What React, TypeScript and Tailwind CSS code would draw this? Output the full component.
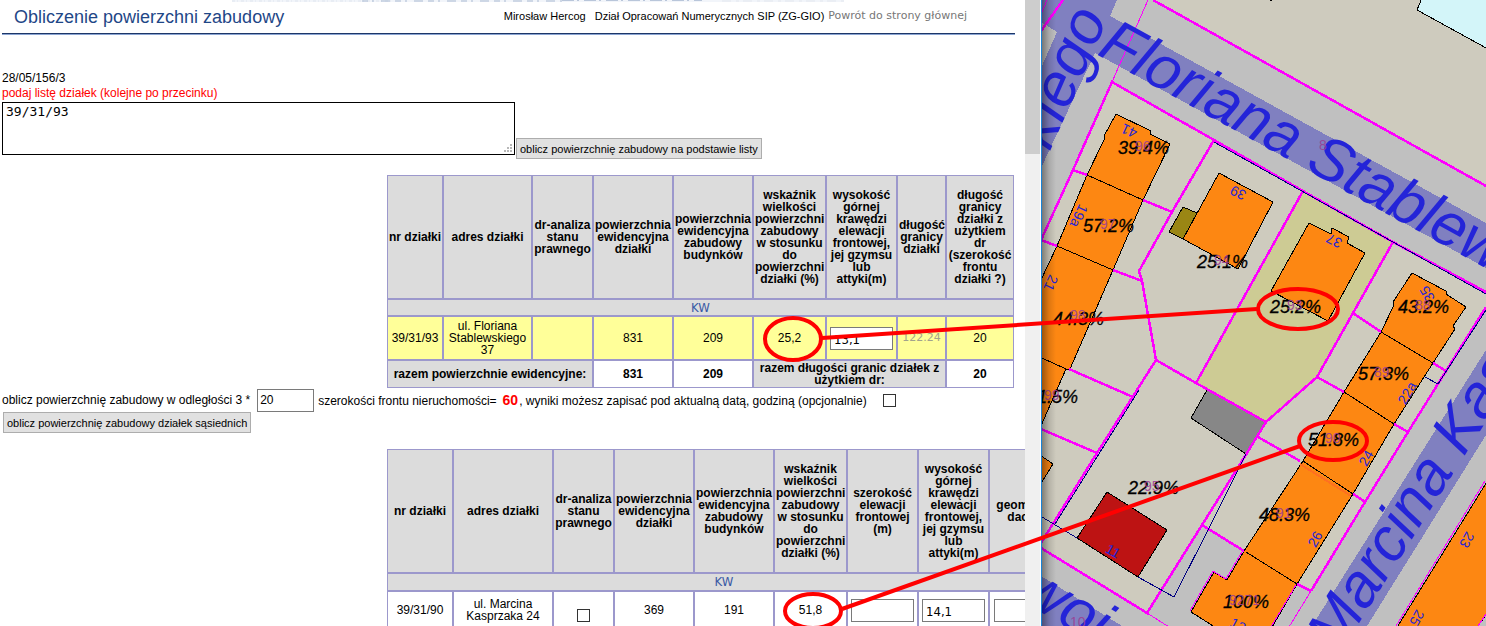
import React from "react";

const ORANGE = "#fd8712";
const MAGENTA = "#ff00ff";

const th = "border border-[#9c98cc] bg-[#dcdcdc] p-px text-center align-middle text-xs leading-3 font-bold";
const td = "border border-[#9c98cc] p-px text-center align-middle text-xs leading-3";
const cellInput = "mx-auto block h-[23px] w-[63px] border border-[#7a7a7a] bg-white px-[3px] pt-[2px] font-['DejaVu_Sans_Condensed',sans-serif] text-[13px] text-black";
const pushButton = "h-[21px] border border-[#adadad] bg-[#e1e1e1] px-[3px] text-left text-[11px] leading-4 whitespace-nowrap text-black";
const tick = "m-0 size-[13px] shrink-0 appearance-none border border-[#333] bg-white";

const areaHeaders = [
  "dr-analiza stanu prawnego",
  "powierzchnia ewidencyjna działki",
  "powierzchnia ewidencyjna zabudowy budynków",
  "wskaźnik wielkości powierzchni zabudowy w stosunku do powierzchni działki (%)",
];
const heightHeader = "wysokość górnej krawędzi elewacji frontowej, jej gzymsu lub attyki(m)";

function Columns({ widths }: { widths: number[] }) {
  return (
    <colgroup>
      {widths.map((w, i) => (
        <col key={i} style={{ width: w }} />
      ))}
    </colgroup>
  );
}

function Header() {
  return (
    <header className="relative mr-[10px] ml-[2px] flex h-[35px] items-center border-b border-[#8aa4d2]">
      <svg className="absolute top-0 left-[230px] h-[2px] w-[612px]" viewBox="0 0 612 2" preserveAspectRatio="none" aria-hidden="true">
        <rect width="612" height="2" fill="#f2f5fa" />
        <path d="M0 1H160" stroke="#dfe5ee" strokeDasharray="3 2 1 3" />
        <path d="M130 1H330" stroke="#a9b9d1" strokeDasharray="6 4 2 7 9 5" />
        <path d="M330 .5H470" stroke="#b9c6da" strokeDasharray="12 3 2 5" />
        <path d="M490 1H612" stroke="#e3e7ee" strokeDasharray="9 5 3 4" />
      </svg>
      <div className="flex h-[34px] w-full items-center border-b border-[#1d3768]">
        <h1 className="ml-3 text-lg text-[#1f4787]">Obliczenie powierzchni zabudowy</h1>
        <div className="mr-12 ml-auto flex items-center text-[11px] whitespace-nowrap">
          <span>Mirosław Hercog</span>
          <span className="ml-[9px]">Dział Opracowań Numerycznych SIP (ZG-GIO)</span>
          <a href="#start" className="ml-1 font-['DejaVu_Sans',sans-serif] text-[#777]">Powrót do strony głównej</a>
        </div>
      </div>
    </header>
  );
}

function PlotTable() {
  return (
    <table className="ml-[387px] w-[627px] table-fixed border-separate border-spacing-0">
      <Columns widths={[56, 89, 61, 80, 80, 73, 71, 49, 68]} />
      <thead>
        <tr className="h-[124px]">
          <th className={`${th} whitespace-nowrap`}>nr działki</th>
          <th className={th}>adres działki</th>
          {areaHeaders.map((h) => (
            <th key={h} className={th}>{h}</th>
          ))}
          <th className={th}>{heightHeader}</th>
          <th className={th}>długość granicy działki</th>
          <th className={th}>długość granicy działki z użytkiem dr (szerokość frontu działki ?)</th>
        </tr>
      </thead>
      <tbody>
        <tr className="h-[17px]">
          <td colSpan={9} className={`${td} bg-[#dcdcdc]`}>
            <a href="#kw" className="font-['DejaVu_Sans_Condensed',sans-serif] text-[13px] text-[#3a5aa5]">KW</a>
          </td>
        </tr>
        <tr className="h-[44px] bg-[#ffff99]">
          <td className={td}>39/31/93</td>
          <td className={td}>ul. Floriana Stablewskiego 37</td>
          <td className={td} />
          <td className={td}>831</td>
          <td className={td}>209</td>
          <td className={td}>25,2</td>
          <td className={td}>
            <input aria-label="wysokość elewacji" defaultValue="13,1" className={cellInput} />
          </td>
          <td className={`${td} font-['DejaVu_Sans',sans-serif] text-[11px] text-[#a3a38c]`}>122.24</td>
          <td className={td}>20</td>
        </tr>
        <tr className="h-[28px] font-bold">
          <td colSpan={3} className={`${td} bg-[#dcdcdc]`}>razem powierzchnie ewidencyjne:</td>
          <td className={td}>831</td>
          <td className={td}>209</td>
          <td colSpan={3} className={`${td} bg-[#dcdcdc]`}>razem długości granic działek z użytkiem dr:</td>
          <td className={td}>20</td>
        </tr>
      </tbody>
    </table>
  );
}

function NeighbourTable() {
  return (
    <table className="ml-[387px] w-[674px] table-fixed border-separate border-spacing-0">
      <Columns widths={[66, 100, 61, 80, 80, 73, 71, 71, 72]} />
      <thead>
        <tr className="h-[124px]">
          <th className={th}>nr działki</th>
          <th className={th}>adres działki</th>
          {areaHeaders.map((h) => (
            <th key={h} className={th}>{h}</th>
          ))}
          <th className={th}>szerokość elewacji frontowej (m)</th>
          <th className={th}>{heightHeader}</th>
          <th className={th}>geometria dachu</th>
        </tr>
      </thead>
      <tbody>
        <tr className="h-[18px]">
          <td colSpan={9} className={`${td} bg-[#dcdcdc]`}>
            <a href="#kw" className="font-['DejaVu_Sans_Condensed',sans-serif] text-[13px] text-[#3a5aa5]">KW</a>
          </td>
        </tr>
        <tr className="h-[38px]">
          <td className={td}>39/31/90</td>
          <td className={td}>ul. Marcina Kasprzaka 24</td>
          <td className={`${td} pt-3`}>
            <input type="checkbox" aria-label="dr-analiza stanu prawnego" className={`${tick} mx-auto block`} />
          </td>
          <td className={td}>369</td>
          <td className={td}>191</td>
          <td className={td}>51,8</td>
          <td className={td}><input aria-label="szerokość elewacji" className={cellInput} /></td>
          <td className={td}><input aria-label="wysokość elewacji działki sąsiedniej" defaultValue="14,1" className={cellInput} /></td>
          <td className={td}><input aria-label="geometria dachu" className={cellInput} /></td>
        </tr>
      </tbody>
    </table>
  );
}

const parcelLines = [
  "1153,0 1486,186",
  "1063,0 1041,31",
  "1041,240 1073,170 1112,82 1214,140 1303,191 1393,242 1486,292",
  "1486,307 1446,371 1408,432 1365,502 1311,591",
  "1041,548 1147,613 1202,525 1247,453 1266,422",
  "1041,543 1097,453 1156,360 1142,281 1139,271 1172,212 1214,140",
  "1073,170 1087,175",
  "1143,200 1172,212",
  "1041,240 1057,246",
  "1113,270 1142,281",
  "1303,191 1196,383",
  "1156,360 1196,383 1266,422 1317,377 1393,242",
  "1354,314 1381,332",
  "1433,363 1446,371",
  "1317,377 1344,392",
  "1394,424 1408,432",
  "1258,437 1300,461",
  "1353,494 1365,502",
  "1202,525 1244,551",
  "1297,584 1311,591",
  "1069,369 1133,397",
  "1041,429 1097,453",
];

const shares: [number, number, string][] = [
  [1118, 154, "39.4%"], [1083, 232, "57.2%"], [1053, 325, "44.3%"], [1197, 268, "25.1%"],
  [1270, 313, "25.2%"], [1398, 313, "43.2%"], [1358, 380, "57.3%"], [1308, 446, "51.8%"],
  [1259, 521, "48.3%"], [1223, 608, "100%"], [1128, 494, "22.9%"], [1037, 403, "1.5%"],
];

const plotNumbers: [number, number, string][] = [
  [1135, 151, "96"], [1100, 229, "97"], [1070, 320, "98"], [1214, 265, "94"], [1287, 310, "93"],
  [1415, 310, "88"], [1374, 377, "89"], [1325, 443, "90"], [1276, 518, "91"], [1144, 491, "95"],
  [1229, 605, "9271"], [1044, 400, "99"], [1319, 150, "8"], [1070, 627, "10"],
];

const houseNumbers: [number, number, number, string][] = [
  [1129, 131, 205, "41"], [1238, 193, 207, "39"], [1334, 241, 207, "37"], [1427, 294, 240, "35"],
  [1079, 216, 115, "19a"], [1051, 283, 115, "21"], [1407, 393, -60, "22a"], [1366, 458, -60, "24"],
  [1315, 539, -60, "26"], [1467, 540, 120, "23"], [1417, 618, 120, "25"], [1238, 625, 28, "13"],
  [1113, 551, 30, "11"],
];

function CadastralMap() {
  return (
    <svg
      className="block size-full"
      viewBox="1042 0 444 626"
      preserveAspectRatio="xMinYMin slice"
      role="img"
      aria-label="Mapa działek i budynków"
      fontFamily="'Liberation Sans', Arial, sans-serif"
    >
      <defs>
        <linearGradient id="edge" x1="0" x2="1" y1="0" y2="0">
          <stop offset="0" stopColor="#000" stopOpacity=".38" />
          <stop offset=".5" stopColor="#000" stopOpacity=".12" />
          <stop offset="1" stopColor="#000" stopOpacity="0" />
        </linearGradient>
      </defs>
      <g shapeRendering="crispEdges">
        <rect x="1041" width="445" height="626" fill="#c0c0c0" />
        <polygon points="1153,0 1486,0 1486,186" fill="#cecbbe" />
        <polygon points="1422,-2 1417,10 1488,49 1488,-2" fill="#d3f5f9" stroke="#000" />
        <rect x="1270" width="2" height="1" fill="#000" />
        <polygon
          points="1112,82 1486,292 1486,307 1446,371 1408,432 1365,502 1311,591 1297,584 1244,551 1202,525 1147,613 1041,548 1041,240"
          fill="#cecbbe"
        />
        <polygon points="1303,191 1393,242 1317,377 1266,422 1196,383" fill="#cdcb94" />

        <g fill="#8080c0">
          <path d="M1041 0H1117L1110 16L1486 223V268L1095 53L1041 168V68L1057 32L1041 22Z" />
          <polygon points="1486,350 1486,435 1367,626 1312,626" />
          <polygon points="1041,576 1122,626 1041,626" />
        </g>

        <g fill={ORANGE} stroke="#000">
          <polygon points="1116,114 1151,131 1150,134 1170,144 1143,200 1113,270 1070,369 1066,369 1040,428 1040,282 1057,246 1087,175 1104,140 1104,136" />
          <polygon points="1040,455 1053,464 1040,485" />
          <polygon points="1219,173 1273,202 1238,269 1183,239" />
          <polygon points="1309,223 1331,234 1332,228 1349,237 1347,243 1365,253 1328,321 1271,291" />
          <polygon points="1412,273 1446,291 1446,294 1466,307 1453,326 1455,329 1433,363 1394,424 1353,494 1297,584 1271,629 1218,629 1191,612 1214,572 1227,580 1244,551 1303,461 1344,392 1381,332 1394,305 1393,302" />
          <polygon points="1488,480 1396,629 1476,629 1488,612" />
          <polygon points="1183,207 1197,213 1183,239 1169,232" fill="#9a8614" />
          <polygon points="1207,390 1265,422 1246,454 1191,418" fill="#878787" />
          <polygon points="1107,492 1167,530 1138,577 1077,538" fill="#bd1313" />
        </g>
        <g stroke="#000" fill="none">
          <path d="M1087 175L1143 200M1057 246L1113 270M1042 358L1066 369M1381 332L1433 363M1344 392L1394 424M1303 461L1353 494M1246 552L1297 584" />
        </g>
        <path d="M1300 464L1351 496" stroke="#ff7020" strokeWidth="2" />
        <g stroke={MAGENTA} strokeWidth="2.5" fill="none">
          {parcelLines.map((points) => (
            <polyline key={points} points={points} />
          ))}
        </g>
        <g stroke={MAGENTA} fill="none">
          <path d="M1148 0L1112 82M1047 0L1041 14M1147 613L1169 627M1311 591L1289 627M1485 481L1396 626M1486 614L1478 626" />
          <path d="M1190 611L1213 571L1226 579L1243 550M1296 585L1271 627" />
        </g>
        <g stroke="#000080" fill="none">
          <path d="M1214 142L1486 294M1486 310L1438 384L1425 377M1042 517L1077 538M1138 577L1174 597L1207 532L1246 454M1139 390L1055 524" />
        </g>
      </g>

      <g fill="#2424d8" fontSize="61" fontStyle="italic">
        <text transform="translate(1096 54) rotate(28.8)">Floriana Stablew</text>
        <text transform="translate(1108 18) rotate(-66.5)" textAnchor="end">kiego</text>
        <text transform="translate(1339 655) rotate(-57.8)">Marcina Kas</text>
        <text transform="translate(1017 598) rotate(31)">woj</text>
      </g>
      <g fill="#2424d8" fontSize="14" textAnchor="middle">
        {houseNumbers.map(([x, y, angle, label]) => (
          <text key={label} transform={`translate(${x} ${y}) rotate(${angle})`} dy="5">{label}</text>
        ))}
      </g>
      <g fontSize="18" fontStyle="italic" stroke="#000" strokeWidth=".3">
        {shares.map(([x, y, label]) => (
          <text key={label} x={x} y={y}>{label}</text>
        ))}
      </g>
      <g fontSize="14" fill="#9b3f93" fillOpacity=".9">
        {plotNumbers.map(([x, y, label]) => (
          <text key={label} x={x} y={y}>{label}</text>
        ))}
      </g>
      <rect x="1042" width="14" height="626" fill="url(#edge)" />
    </svg>
  );
}

function Annotations() {
  return (
    <svg
      className="pointer-events-none absolute inset-0 size-full"
      viewBox="0 0 1486 626"
      preserveAspectRatio="xMinYMin slice"
      fill="none"
      stroke="#ff0000"
      strokeWidth="4"
      aria-hidden="true"
    >
      <ellipse cx="793" cy="339" rx="28" ry="21" />
      <path d="M822 338L1257 309" />
      <ellipse cx="1298" cy="309" rx="40" ry="20" />
      <ellipse cx="813" cy="611" rx="28" ry="17" />
      <path d="M842 609L1300 446" />
      <ellipse cx="1333" cy="441" rx="34" ry="19" />
    </svg>
  );
}

export default function App() {
  return (
    <div className="relative grid h-screen grid-cols-[1041fr_445fr] overflow-hidden bg-white font-['Liberation_Sans',Arial,sans-serif] text-black">
      <div className="flex min-w-0 overflow-hidden">
        <main className="min-w-0 flex-1 overflow-hidden">
          <Header />
          <section className="mt-9 ml-[2px] text-xs leading-[15px]">
            <p>28/05/156/3</p>
            <label htmlFor="plots" className="block text-[#ff0000]">podaj listę działek (kolejne po przecinku)</label>
            <div className="mt-px flex items-end gap-px">
              <div className="relative mb-1 w-[513px]">
                <textarea
                  id="plots"
                  defaultValue="39/31/93"
                  className="block h-[53px] w-full resize-none border border-black bg-white px-[3px] py-px font-['DejaVu_Sans_Mono',monospace] text-[13px] leading-4"
                />
                <svg className="absolute right-[3px] bottom-[3px] size-2" viewBox="0 0 8 8" fill="#b8b8b8" aria-hidden="true">
                  <path d="M6 0h2v2H6zM3 3h2v2H3zM6 3h2v2H6zM0 6h2v2H0zM3 6h2v2H3zM6 6h2v2H6z" />
                </svg>
              </div>
              <button type="button" className={pushButton}>oblicz powierzchnię zabudowy na podstawie listy</button>
            </div>
          </section>
          <div className="mt-4">
            <PlotTable />
          </div>
          <section className="ml-[2px] text-xs">
            <div className="flex h-6 items-center whitespace-nowrap">
              <label htmlFor="distance">oblicz powierzchnię zabudowy w odległości 3 *</label>
              <input
                id="distance"
                defaultValue="20"
                className="mr-1 ml-[7px] h-[23px] w-[57px] border border-[#7a7a7a] bg-white px-[2px] text-xs"
              />
              <label htmlFor="save">
                szerokości frontu nieruchomości=
                <b className="mr-px ml-[6px] text-sm leading-4 text-[#ff0000]">60</b>, wyniki możesz zapisać pod aktualną datą, godziną (opcjonalnie)
              </label>
              <input id="save" type="checkbox" className={`${tick} ml-4`} />
            </div>
            <button type="button" className={`${pushButton} ml-px block`}>oblicz powierzchnię zabudowy działek sąsiednich</button>
          </section>
          <div className="mt-4">
            <NeighbourTable />
          </div>
        </main>
        <div className="w-4 shrink-0 border-r border-white bg-[#f0f0f0]" aria-hidden="true">
          <div className="h-[154px] bg-[#cdcdcd]" />
        </div>
      </div>
      <aside className="min-w-0 overflow-hidden border-l border-[#1883d7]">
        <CadastralMap />
      </aside>
      <Annotations />
    </div>
  );
}
